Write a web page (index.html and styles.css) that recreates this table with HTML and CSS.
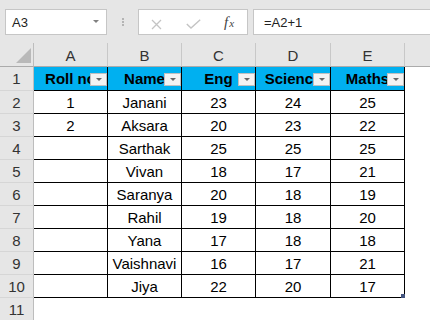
FILE: index.html
```html
<!DOCTYPE html>
<html>
<head>
<meta charset="utf-8">
<link rel="stylesheet" href="styles.css">
</head>
<body>
<div class="app">
  <div class="toolbar">
    <div class="namebox"><span class="nb-text">A3</span><span class="nb-arrow"></span></div>
    <div class="grip"><span></span><span></span><span></span></div>
    <div class="fxbox">
      <svg class="ic-x" width="11" height="11" viewBox="0 0 11 11"><path d="M1 1 L10 10 M10 1 L1 10" stroke="#c4c4c4" stroke-width="1.3" fill="none"/></svg>
      <svg class="ic-ok" width="15" height="10" viewBox="0 0 15 10"><path d="M0.8 5 L5 9 L14.2 0.8" stroke="#c4c4c4" stroke-width="1.4" fill="none"/></svg>
      <span class="fx"><i>f</i><span class="fx-x">x</span></span>
    </div>
    <div class="formula">=A2+1</div>
  </div>
  <div class="sheet">
    <div class="corner"><span class="tri"></span></div>
    <div class="ch">A</div><div class="ch">B</div><div class="ch">C</div><div class="ch">D</div><div class="ch">E</div><div class="ch ch-last"></div>

    <div class="rh">1</div>
    <div class="c th">Roll no<span class="dd"></span></div>
    <div class="c th">Name<span class="dd"></span></div>
    <div class="c th">Eng<span class="dd"></span></div>
    <div class="c th">Science<span class="dd"></span></div>
    <div class="c th">Maths<span class="dd"></span></div>
    <div class="e"></div>

    <div class="rh">2</div><div class="c">1</div><div class="c">Janani</div><div class="c">23</div><div class="c">24</div><div class="c">25</div><div class="e"></div>
    <div class="rh">3</div><div class="c">2</div><div class="c">Aksara</div><div class="c">20</div><div class="c">23</div><div class="c">22</div><div class="e"></div>
    <div class="rh">4</div><div class="c"></div><div class="c">Sarthak</div><div class="c">25</div><div class="c">25</div><div class="c">25</div><div class="e"></div>
    <div class="rh">5</div><div class="c"></div><div class="c">Vivan</div><div class="c">18</div><div class="c">17</div><div class="c">21</div><div class="e"></div>
    <div class="rh">6</div><div class="c"></div><div class="c">Saranya</div><div class="c">20</div><div class="c">18</div><div class="c">19</div><div class="e"></div>
    <div class="rh">7</div><div class="c"></div><div class="c">Rahil</div><div class="c">19</div><div class="c">18</div><div class="c">20</div><div class="e"></div>
    <div class="rh">8</div><div class="c"></div><div class="c">Yana</div><div class="c">17</div><div class="c">18</div><div class="c">18</div><div class="e"></div>
    <div class="rh">9</div><div class="c"></div><div class="c">Vaishnavi</div><div class="c">16</div><div class="c">17</div><div class="c">21</div><div class="e"></div>
    <div class="rh">10</div><div class="c"></div><div class="c">Jiya</div><div class="c">22</div><div class="c">20</div><div class="c last">17<span class="handle"></span></div><div class="e"></div>
    <div class="rh">11</div><div class="e"></div><div class="e"></div><div class="e"></div><div class="e"></div><div class="e"></div><div class="e"></div>
  </div>
</div>
</body>
</html>
```
FILE: styles.css
```css
* { box-sizing: border-box; }
html, body {
  margin: 0;
  padding: 0;
  width: 430px;
  height: 320px;
  overflow: hidden;
  background: #ffffff;
  font-family: "Liberation Sans", Arial, sans-serif;
}
.app {
  display: flex;
  flex-direction: column;
  width: 430px;
  height: 320px;
}
.toolbar {
  height: 43px;
  background: #e6e6e6;
  display: flex;
  align-items: flex-start;
  padding: 9px 0 0 5px;
  flex: none;
}
.namebox {
  width: 102px;
  height: 26px;
  background: #fff;
  border: 1px solid #c6c6c6;
  display: flex;
  align-items: center;
  justify-content: space-between;
  padding: 0 7px 0 6px;
  font-size: 13px;
  color: #222;
}
.nb-arrow {
  width: 0;
  height: 0;
  border-left: 3px solid transparent;
  border-right: 3px solid transparent;
  border-top: 3px solid #808080;
  margin-top: -2px;
}
.grip {
  width: 31px;
  height: 26px;
  display: flex;
  flex-direction: column;
  align-items: center;
  justify-content: center;
  gap: 1px;
}
.grip span {
  width: 2px;
  height: 2px;
  background: #b4b4b4;
}
.fxbox {
  width: 110px;
  height: 26px;
  background: #fff;
  border: 1px solid #c6c6c6;
  display: flex;
  align-items: center;
  padding: 1px 0 0 12px;
}
.ic-x { margin-top: 3px; }
.ic-ok { margin-left: 24px; margin-top: 3px; }
.fx {
  margin-left: 23px;
  font-family: "Liberation Serif", "Times New Roman", serif;
  color: #444;
  font-size: 15px;
  line-height: 1;
}
.fx-x {
  font-style: italic;
  font-size: 11px;
  margin-left: 1px;
}
.formula {
  flex: 1;
  margin-left: 5px;
  height: 26px;
  background: #fff;
  border: 1px solid #c6c6c6;
  border-right: none;
  display: flex;
  align-items: center;
  padding-left: 10px;
  font-size: 13px;
  color: #222;
}
.sheet {
  display: grid;
  grid-template-columns: 34px 74px 74px 74px 75px 74px 1fr;
  grid-template-rows: 24px 24px repeat(10, 23px);
  flex: 1;
  font-size: 15px;
  color: #000;
}
.corner {
  background: #e6e6e6;
  border-right: 1px solid #bdbdbd;
  border-bottom: 1px solid #ababab;
  position: relative;
}
.tri {
  position: absolute;
  right: 2px;
  bottom: 3px;
  width: 0;
  height: 0;
  border-left: 15px solid transparent;
  border-bottom: 15px solid #b9b9b9;
}
.ch {
  background: #e6e6e6;
  border-right: 1px solid #c8c8c8;
  border-bottom: 1px solid #ababab;
  display: flex;
  align-items: center;
  justify-content: center;
  color: #333;
  padding-top: 1px;
}
.ch-last { border-right: none; }
.rh {
  background: #e6e6e6;
  border-right: 1px solid #bdbdbd;
  border-bottom: 1px solid #d6d6d6;
  display: flex;
  align-items: center;
  justify-content: center;
  color: #333;
}
.c {
  border-right: 1px solid #000;
  border-bottom: 1px solid #000;
  display: flex;
  align-items: center;
  justify-content: center;
  white-space: nowrap;
  overflow: hidden;
  position: relative;
}
.th {
  background: #00b0f0;
  font-weight: bold;
  overflow: hidden;
}
.dd {
  position: absolute;
  right: 0;
  top: 6px;
  width: 17px;
  height: 13px;
  background: #f3f3f3;
  border: 1px solid #c0c0c0;
}
.dd::after {
  content: "";
  position: absolute;
  left: 5px;
  top: 4px;
  border-left: 3px solid transparent;
  border-right: 3px solid transparent;
  border-top: 3px solid #666;
}
.last { overflow: visible; }
.handle {
  position: absolute;
  right: -1px;
  bottom: -1px;
  width: 4px;
  height: 4px;
  background: #44557f;
}
.e { background: #fff; }
```
